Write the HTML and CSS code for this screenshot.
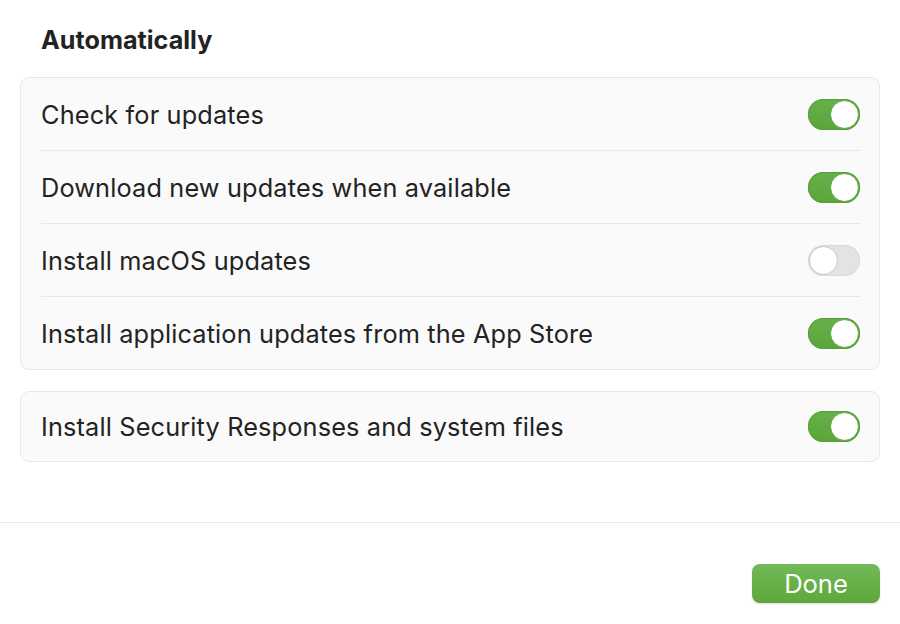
FILE: index.html
```html
<!DOCTYPE html>
<html lang="en">
<head>
    <meta charset="UTF-8">
    <meta name="viewport" content="width=device-width, initial-scale=1.0">
    <title>Automatic Updates</title>
    <link rel="stylesheet" href="styles.css">
</head>
<body>
    <main class="sheet">
        <section class="content">
            <h2 class="section-title">Automatically</h2>

            <div class="group">
                <div class="row">
                    <span class="label">Check for updates</span>
                    <span class="switch on"></span>
                </div>
                <div class="row">
                    <span class="label">Download new updates when available</span>
                    <span class="switch on"></span>
                </div>
                <div class="row">
                    <span class="label">Install macOS updates</span>
                    <span class="switch"></span>
                </div>
                <div class="row">
                    <span class="label">Install application updates from the App Store</span>
                    <span class="switch on"></span>
                </div>
            </div>

            <div class="group">
                <div class="row">
                    <span class="label">Install Security Responses and system files</span>
                    <span class="switch on"></span>
                </div>
            </div>
        </section>

        <footer class="actions">
            <button class="btn-done">Done</button>
        </footer>
    </main>
</body>
</html>
```

FILE: styles.css
```css
/* page */
body {
    margin: 0;
    background: #ffffff;
    font-family: Inter, "Noto Sans", sans-serif;
    color: #232323;
}

.sheet {
    display: flex;
    flex-direction: column;
    height: 624px;
}

/* settings area */
.content {
    padding: 0 20px;
    height: 522px;
    box-sizing: border-box;
}

.section-title {
    font-size: 25.2px;
    font-weight: 700;
    margin: 0 0 22px;
    padding: 26px 0 0 21px;
    line-height: 29px;
}

/* grouped list */
.group {
    background: #fafafa;
    border: 1px solid #e8e8e8;
    border-radius: 9px;
    margin-bottom: 21px;
}

.row {
    display: flex;
    align-items: center;
    justify-content: space-between;
    height: 72px;
    margin: 0 19px 0 20px;
    border-top: 1px solid #e8e8e8;
}

.row:first-child {
    border-top: none;
}

.group:last-child .row {
    height: 69px;
}

.label {
    font-size: 25.3px;
    letter-spacing: 0.15px;
}

/* toggle switch */
.switch {
    position: relative;
    width: 52px;
    height: 31px;
    border-radius: 16px;
    background: #e3e3e3;
    box-shadow: inset 0 0 0 1px #dadada;
}

.switch::after {
    content: "";
    position: absolute;
    top: 1px;
    left: 1px;
    width: 27px;
    height: 27px;
    border-radius: 50%;
    background: #ffffff;
    border: 1px solid #c8c8c8;
}

.switch.on {
    background: linear-gradient(#66b048, #5aa63b);
    box-shadow: inset 0 0 0 1px #55a036;
}

.switch.on::after {
    left: 22px;
    border-color: #5a9f3e;
}

/* bottom bar */
.actions {
    border-top: 1px solid #ececec;
    display: flex;
    justify-content: flex-end;
    padding: 41px 20px 0;
}

.btn-done {
    width: 128px;
    height: 39px;
    border: none;
    border-radius: 8px;
    background: linear-gradient(#72b957, #5ea83b);
    color: #ffffff;
    font-family: Inter, "Noto Sans", sans-serif;
    font-size: 25.5px;
    box-shadow: 0 1px 2px rgba(0, 0, 0, 0.15);
}
```
